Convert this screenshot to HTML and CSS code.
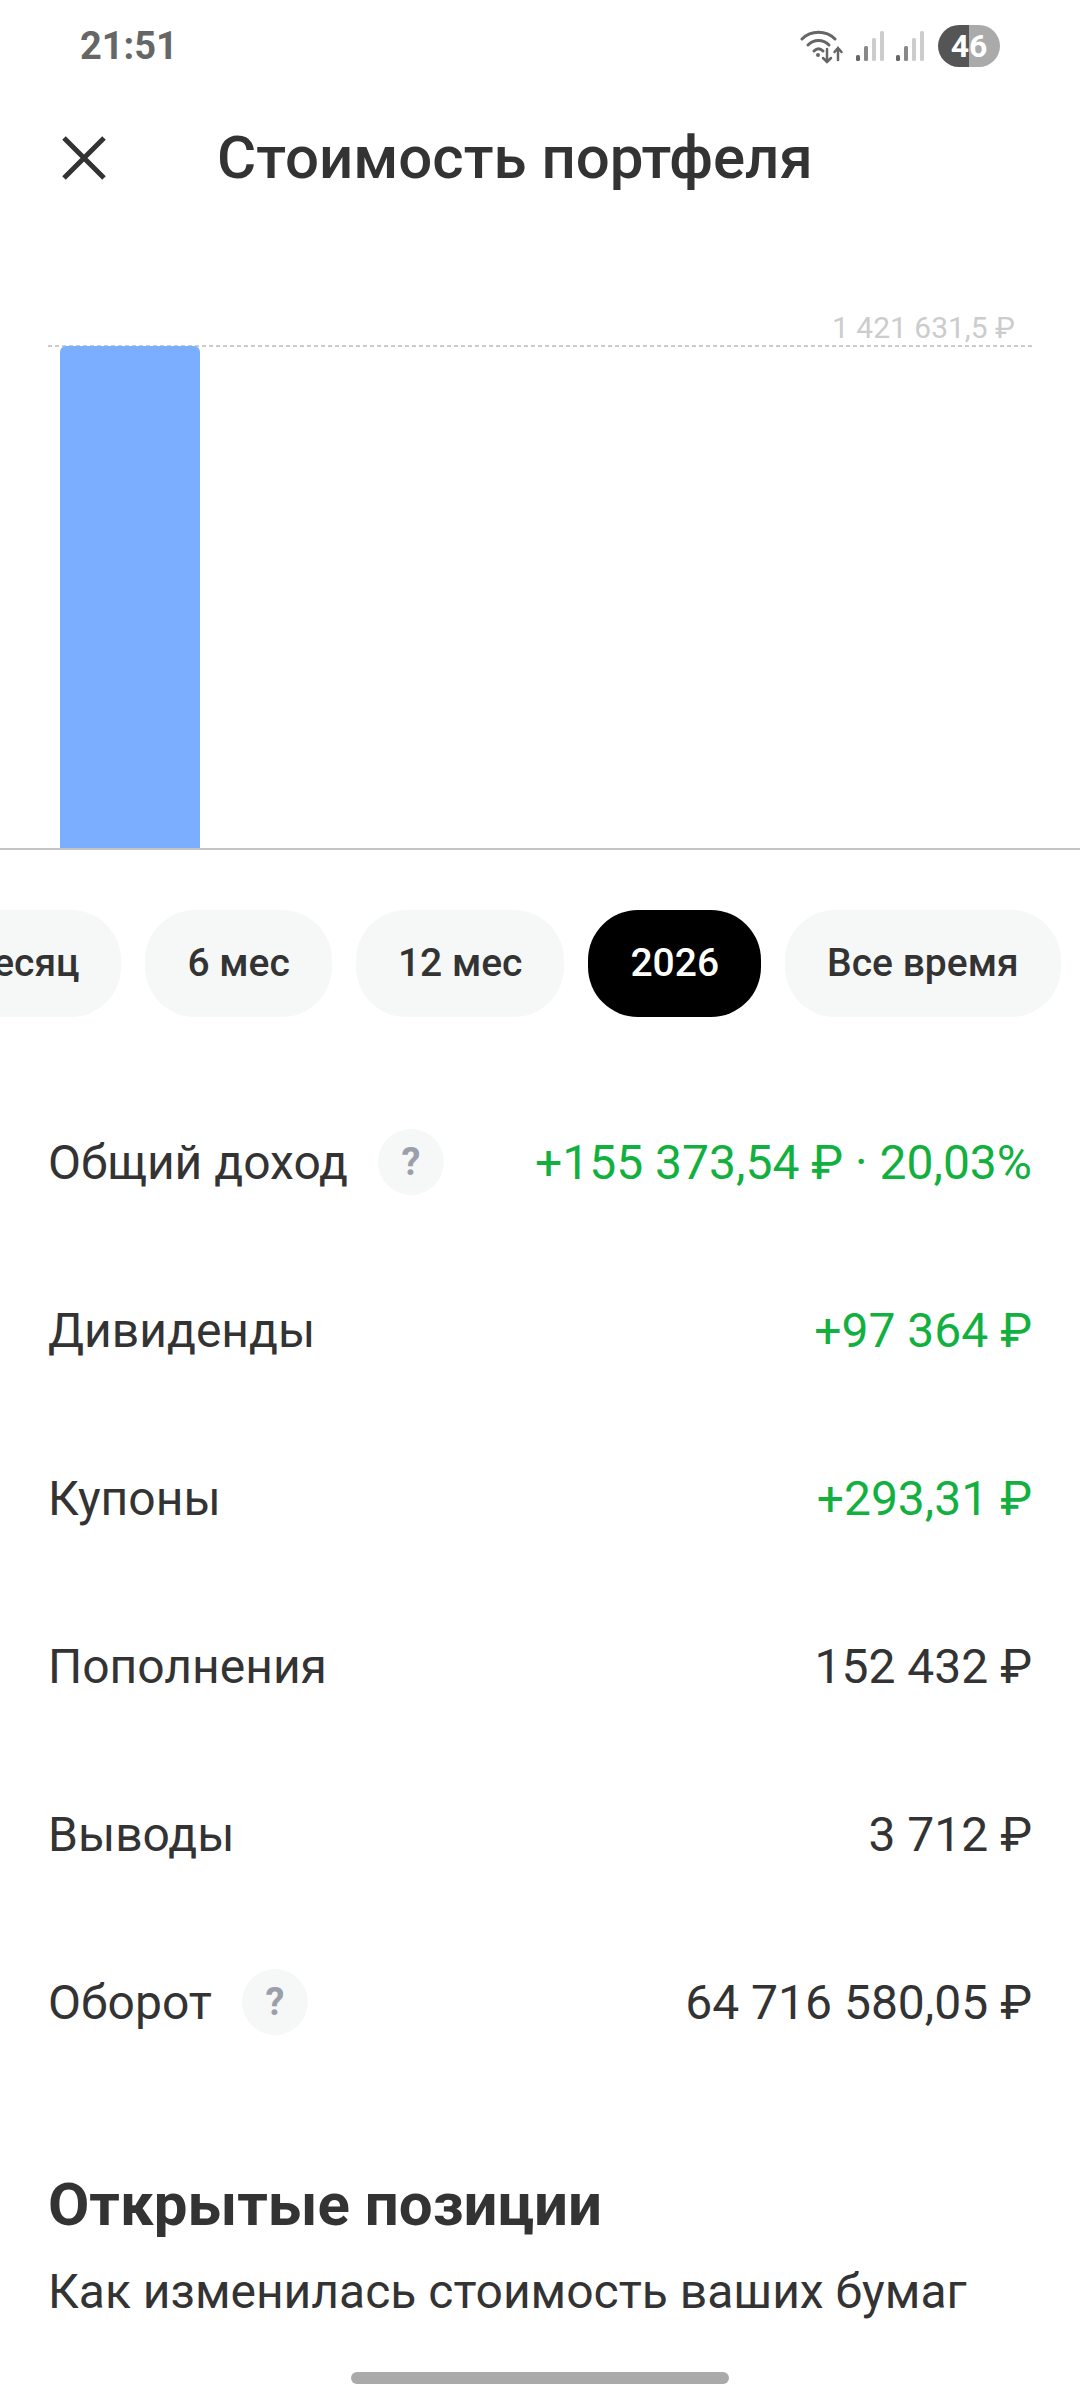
FILE: index.html

```html
<!DOCTYPE html>
<html lang="ru">
<head>
    <meta charset="UTF-8">
    <meta name="viewport" content="width=device-width, initial-scale=1.0">
    <title>Стоимость портфеля</title>
    <link rel="stylesheet" href="styles.css">
</head>
<body>
    <div class="screen">
        <div class="status-bar">
            <span class="time">21:51</span>
            <div class="status-icons">
                <svg class="wifi" width="44" height="36" viewBox="0 0 44 36" fill="none" stroke="#666" stroke-linecap="round">
                    <path d="M2 11C11 2 26 2 35 11" stroke-width="3"/>
                    <path d="M8 17C14 11 23 11 29 17" stroke-width="3"/>
                    <path d="M14 23C17 20 20 20 23 23" stroke-width="3"/>
                    <circle cx="18" cy="27" r="2" fill="#666" stroke="none"/>
                    <path d="M27 21V34M23 30L27 34L31 30" stroke-width="2.5"/>
                    <path d="M38 32V20M34.500 24L38 20L41.500 24" stroke-width="2.500"/>
                </svg>
                <svg class="signal" width="28" height="32" viewBox="0 0 28 32">
                    <rect x="0" y="25" width="4" height="6" rx="1.500" fill="#666"/>
                    <rect x="8" y="16" width="4" height="15" rx="1.500" fill="#888"/>
                    <rect x="16" y="8" width="4" height="23" rx="1.500" fill="#ccc"/>
                    <rect x="24" y="1" width="4" height="30" rx="1.500" fill="#ccc"/>
                </svg>
                <svg class="signal" width="28" height="32" viewBox="0 0 28 32">
                    <rect x="0" y="25" width="4" height="6" rx="1.500" fill="#666"/>
                    <rect x="8" y="16" width="4" height="15" rx="1.500" fill="#888"/>
                    <rect x="16" y="8" width="4" height="23" rx="1.500" fill="#ccc"/>
                    <rect x="24" y="1" width="4" height="30" rx="1.500" fill="#ccc"/>
                </svg>
                <div class="battery">46</div>
            </div>
        </div>

        <div class="header">
            <svg class="close" width="44" height="44" viewBox="0 0 44 44" fill="none" stroke="#333" stroke-width="5">
                <path d="M2 2L42 42M42 2L2 42"/>
            </svg>
            <h1>Стоимость портфеля</h1>
        </div>

        <div class="chart">
            <div class="max-label">1 421 631,5 ₽</div>
            <div class="plot">
                <div class="bar"></div>
            </div>
        </div>

        <div class="chips">
            <div class="chip">1 месяц</div>
            <div class="chip">6 мес</div>
            <div class="chip">12 мес</div>
            <div class="chip active">2026</div>
            <div class="chip">Все время</div>
        </div>

        <div class="rows">
            <div class="row">
                <div class="row-name">Общий доход <span class="help">?</span></div>
                <div class="row-value green">+155 373,54 ₽ · 20,03%</div>
            </div>
            <div class="row">
                <div class="row-name">Дивиденды</div>
                <div class="row-value green">+97 364 ₽</div>
            </div>
            <div class="row">
                <div class="row-name">Купоны</div>
                <div class="row-value green">+293,31 ₽</div>
            </div>
            <div class="row">
                <div class="row-name">Пополнения</div>
                <div class="row-value">152 432 ₽</div>
            </div>
            <div class="row">
                <div class="row-name">Выводы</div>
                <div class="row-value">3 712 ₽</div>
            </div>
            <div class="row">
                <div class="row-name">Оборот <span class="help">?</span></div>
                <div class="row-value">64 716 580,05 ₽</div>
            </div>
        </div>

        <div class="positions">
            <h2>Открытые позиции</h2>
            <p>Как изменилась стоимость ваших бумаг</p>
        </div>

        <div class="home-bar"></div>
    </div>
</body>
</html>
```

FILE: styles.css

```css
body {
    margin: 0;
    padding: 0;
    background-color: #fff;
    color: #333;
    font-family: Roboto, "Noto Sans", sans-serif;
}
.screen {
    position: relative;
    width: 1080px;
    height: 2400px;
    overflow: hidden;
}
.status-bar {
    display: flex;
    justify-content: space-between;
    align-items: center;
    height: 46px;
    padding: 23px 80px 0;
}
.time {
    font-size: 38px;
    font-weight: 700;
    color: #666;
}
.status-icons {
    display: flex;
    align-items: center;
    gap: 8px;
}
.signal {
    margin-left: 4px;
}
.battery {
    width: 62px;
    height: 42px;
    margin-left: 6px;
    border-radius: 21px;
    background: linear-gradient(to right, #555 50%, #aaa 50%);
    color: #fff;
    font-size: 32px;
    font-weight: 700;
    line-height: 42px;
    text-align: center;
}
.header {
    display: flex;
    align-items: center;
    height: 80px;
    margin-top: 49px;
    padding-left: 62px;
}
.header h1 {
    margin: 0 0 0 111px;
    font-size: 60px;
    font-weight: 500;
    line-height: 80px;
}
.chart {
    margin-top: 113px;
}
.max-label {
    height: 34px;
    padding-right: 65px;
    color: #ccc;
    font-size: 30px;
    line-height: 34px;
    text-align: right;
}
.plot {
    height: 505px;
    background:
        repeating-linear-gradient(to right, #ccc 0 4px, transparent 4px 7px) 48px 0 / 984px 2px no-repeat;
    border-bottom: 2px solid #c4c4c4;
    padding: 1px 0 0 60px;
    box-sizing: border-box;
}
.bar {
    width: 140px;
    height: 100%;
    background-color: #7baeff;
    border-radius: 6px 6px 0 0;
}
.chips {
    display: flex;
    gap: 24px;
    margin-top: 60px;
    margin-left: -110px;
}
.chip {
    flex: none;
    height: 107px;
    padding: 0 42px;
    border-radius: 50px;
    background-color: #f6f7f7;
    font-size: 39px;
    font-weight: 500;
    line-height: 107px;
}
.chip.active {
    background-color: #000;
    color: #fff;
}
.rows {
    margin-top: 61px;
    padding: 0 48px;
}
.row {
    display: flex;
    justify-content: space-between;
    align-items: center;
    height: 168px;
    font-size: 48px;
}
.row-name {
    display: flex;
    align-items: center;
    gap: 30px;
}
.help {
    width: 66px;
    height: 66px;
    border-radius: 50%;
    background-color: #f6f7f7;
    color: #9a9fab;
    font-size: 38px;
    font-weight: 700;
    line-height: 66px;
    text-align: center;
}
.green {
    color: #12b03f;
}
.positions {
    margin-top: 84px;
    padding: 0 48px;
}
.positions h2 {
    margin: 0;
    font-size: 60px;
    font-weight: 700;
    line-height: 70px;
}
.positions p {
    margin: 24px 0 0;
    font-size: 48px;
    line-height: 56px;
}
.home-bar {
    position: absolute;
    left: 351px;
    bottom: 16px;
    width: 378px;
    height: 12px;
    border-radius: 6px;
    background-color: #aaa;
}
```
